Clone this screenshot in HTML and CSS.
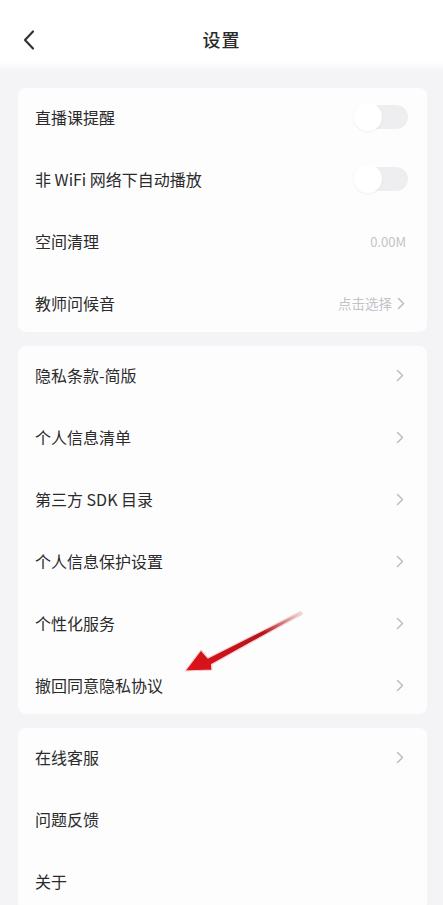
FILE: index.html
```html
<!DOCTYPE html>
<html lang="zh">
<head>
<meta charset="utf-8">
<link rel="stylesheet" href="styles.css">
</head>
<body>
<div class="page">
  <header class="topbar">
    <svg class="back" width="14" height="22" viewBox="0 0 14 22"><path d="M11 2.5 L3 11 L11 19.5" fill="none" stroke="#333" stroke-width="2.2" stroke-linecap="round" stroke-linejoin="round"/></svg>
    <div class="title">设置</div>
  </header>
  <main class="content">
    <section class="card">
      <div class="row"><span class="label">直播课提醒</span><span class="toggle"><span class="knob"></span></span></div>
      <div class="row"><span class="label">非 WiFi 网络下自动播放</span><span class="toggle"><span class="knob"></span></span></div>
      <div class="row"><span class="label">空间清理</span><span class="value">0.00M</span></div>
      <div class="row"><span class="label">教师问候音</span><span class="right"><span class="value">点击选择</span><svg class="chev" width="8" height="13" viewBox="0 0 8 13"><path d="M1.5 1.5 L6.5 6.5 L1.5 11.5" fill="none" stroke="#bdbdc2" stroke-width="1.5" stroke-linecap="round" stroke-linejoin="round"/></svg></span></div>
    </section>
    <section class="card">
      <div class="row"><span class="label">隐私条款-简版</span><svg class="chev" width="8" height="13" viewBox="0 0 8 13"><path d="M1.5 1.5 L6.5 6.5 L1.5 11.5" fill="none" stroke="#bdbdc2" stroke-width="1.5" stroke-linecap="round" stroke-linejoin="round"/></svg></div>
      <div class="row"><span class="label">个人信息清单</span><svg class="chev" width="8" height="13" viewBox="0 0 8 13"><path d="M1.5 1.5 L6.5 6.5 L1.5 11.5" fill="none" stroke="#bdbdc2" stroke-width="1.5" stroke-linecap="round" stroke-linejoin="round"/></svg></div>
      <div class="row"><span class="label">第三方 SDK 目录</span><svg class="chev" width="8" height="13" viewBox="0 0 8 13"><path d="M1.5 1.5 L6.5 6.5 L1.5 11.5" fill="none" stroke="#bdbdc2" stroke-width="1.5" stroke-linecap="round" stroke-linejoin="round"/></svg></div>
      <div class="row"><span class="label">个人信息保护设置</span><svg class="chev" width="8" height="13" viewBox="0 0 8 13"><path d="M1.5 1.5 L6.5 6.5 L1.5 11.5" fill="none" stroke="#bdbdc2" stroke-width="1.5" stroke-linecap="round" stroke-linejoin="round"/></svg></div>
      <div class="row"><span class="label">个性化服务</span><svg class="chev" width="8" height="13" viewBox="0 0 8 13"><path d="M1.5 1.5 L6.5 6.5 L1.5 11.5" fill="none" stroke="#bdbdc2" stroke-width="1.5" stroke-linecap="round" stroke-linejoin="round"/></svg></div>
      <div class="row"><span class="label">撤回同意隐私协议</span><svg class="chev" width="8" height="13" viewBox="0 0 8 13"><path d="M1.5 1.5 L6.5 6.5 L1.5 11.5" fill="none" stroke="#bdbdc2" stroke-width="1.5" stroke-linecap="round" stroke-linejoin="round"/></svg></div>
    </section>
    <section class="card">
      <div class="row"><span class="label">在线客服</span><svg class="chev" width="8" height="13" viewBox="0 0 8 13"><path d="M1.5 1.5 L6.5 6.5 L1.5 11.5" fill="none" stroke="#bdbdc2" stroke-width="1.5" stroke-linecap="round" stroke-linejoin="round"/></svg></div>
      <div class="row"><span class="label">问题反馈</span></div>
      <div class="row"><span class="label">关于</span></div>
    </section>
  </main>
  <svg class="arrow" width="443" height="905" viewBox="0 0 443 905">
    <defs>
      <linearGradient id="ag" x1="0" y1="1" x2="1" y2="0">
        <stop offset="0" stop-color="#e0121a"/>
        <stop offset="0.65" stop-color="#b5141c"/>
        <stop offset="1" stop-color="#efe6e6"/>
      </linearGradient>
    </defs>
    <path d="M185 671 L201 650 L208 658 L300.5 611.5 L302.5 614 L211.5 664.5 L212 670 Z" fill="url(#ag)" stroke="#f6d3d3" stroke-width="1.2" stroke-linejoin="round"/>
  </svg>
</div>
</body>
</html>
```
FILE: styles.css
```css
* { box-sizing: border-box; }
html, body { margin: 0; padding: 0; }
body {
  background: #f4f4f6;
  font-family: "Noto Sans CJK SC", "Noto Sans", sans-serif;
  color: #333;
}
.page {
  position: relative;
  width: 443px;
  height: 905px;
  overflow: hidden;
}
.topbar {
  height: 72px;
  background: linear-gradient(#ffffff 0, #ffffff 62px, #f4f4f6 72px);
  display: flex;
  align-items: center;
  justify-content: center;
  position: relative;
  padding-bottom: 0;
}
.back {
  position: absolute;
  left: 22px;
  top: 29px;
}
.title {
  font-size: 18px;
  font-weight: 500;
  color: #2a2a2a;
  letter-spacing: 1px;
  margin-top: 6px;
}
.content {
  padding: 16px 16px 0 18px;
  display: flex;
  flex-direction: column;
  gap: 14px;
}
.card {
  background: #fdfdfe;
  border-radius: 8px;
  padding: 0 20px 0 17px;
  display: flex;
  flex-direction: column;
  gap: 4px;
}
.row {
  height: 58px;
  display: flex;
  align-items: center;
  justify-content: space-between;
}
.label {
  font-size: 16px;
  color: #2b2b2b;
}
.right {
  display: flex;
  align-items: center;
  gap: 5px;
  margin-right: 2px;
}
.value {
  font-size: 13.5px;
  color: #c3c3c7;
}
.row > .value { margin-right: 1px; font-size: 13px; }
.chev { display: block; margin-right: 3px; }
.right .chev { margin-right: 0; }
.toggle {
  width: 52px;
  height: 24px;
  border-radius: 12px;
  background: #eeeef0;
  position: relative;
  margin-right: -1px;
}
.knob {
  position: absolute;
  left: -2px;
  top: -2px;
  width: 28px;
  height: 28px;
  border-radius: 50%;
  background: #fff;
  box-shadow: 0 1px 3px rgba(0,0,0,0.06);
}
.arrow {
  position: absolute;
  left: 0;
  top: 0;
  pointer-events: none;
}
```
